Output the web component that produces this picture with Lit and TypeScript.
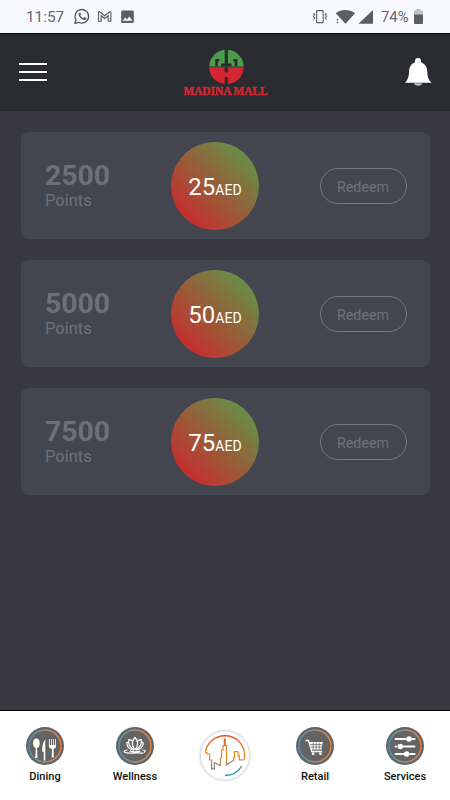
import { LitElement, html, css, svg } from "lit";
import { customElement, property } from "lit/decorators.js";

const dining = svg`
  <g fill="#fffdf0">
    <ellipse cx="10.4" cy="16.2" rx="3.3" ry="4.700"/><path d="M9.900 19.500h1.100l.5 11.500h-2.200z"/>
    <path d="M19.300 12.300c-2.600 3.600-3.500 8.200-3.100 12.500h1.500v8.700h1.600z"/>
    <path d="M22.900 12h.9v6h1.300v-6h.8v6h1.300v-6h.8v6h1.200v-6h.8v7c0 1.700-1 2.600-2.500 3l.4 8.500h-2.200l.3-8.500c-1.900-.4-3.100-1.300-3.100-3z"/>
  </g>`;

const wellness = svg`
  <g fill="none" stroke="#fff" stroke-width="1.250" stroke-linejoin="round" stroke-linecap="round">
    <path d="M19 10.500c-2.300 2.500-3.200 6-2 9 .4 1.200 1 2.100 2 3 1-.9 1.600-1.800 2-3 1.200-3 .3-6.500-2-9z"/>
    <path d="M15.800 13.500c-1.600-.9-2.400-.9-3-.8-.6 4 .5 7.500 5 9.900M22.200 13.500c1.600-.9 2.400-.9 3-.8.6 4-.5 7.500-5 9.900"/>
    <path d="M12.500 15.500c-.7-.3-1.200-.2-1.700.2.200 3.800 2 6.500 6.500 7.100M25.500 15.500c.7-.3 1.200-.2 1.700.2-.2 3.800-2 6.500-6.500 7.100"/>
    <path d="M11 23c-2.500.5-3.500 1.300-2.500 2 2 1.500 7 1.300 12 .9 3.200-.3 5 .1 6.300.5M27 23c2.500.5 2.700 1.600 1.200 2.300M14 24.200c3 .7 7 .7 10 0"/>
  </g>`;

const retail = svg`
  <path d="M9.500 13.500h3l3.300 11h10.400" fill="none" stroke="#fff" stroke-width="1.300"/>
  <path d="M13 15h13.800l-1.300 7.500H15z" fill="#fff"/>
  <path d="M14 17.600h12.500M14.500 20.100h11.500M17.200 15.700v6.500M20.200 15.700v6.500M23.200 15.700v6.500" stroke="#646464" stroke-width=".75"/>
  <circle cx="17.200" cy="26.700" r="1.400" fill="#fff"/><circle cx="24.500" cy="26.700" r="1.400" fill="#fff"/>`;

const services = svg`
  <g stroke="#fff" stroke-width="2.100" stroke-linecap="round">
    <path d="M9.500 12h10M26.500 12h2M9.500 19.500h.6M18 19.500h10.500M9.500 27h8M24.500 27h4"/>
  </g>
  <g fill="#fff"><circle cx="23" cy="12" r="2.800"/><circle cx="14.300" cy="19.500" r="2.800"/><circle cx="20.700" cy="27" r="2.800"/></g>`;

@customElement("status-bar")
class StatusBar extends LitElement {
  static styles = css`
    :host { display: flex; align-items: center; height: 34px; box-sizing: border-box; background: #f9faff; border-bottom: 1px solid #07071a; font: 400 15.300px Roboto, sans-serif; padding: 0 27px 0 26px; }
    .time { width: 47px; }
    .left { display: block; width: 62px; height: 33px; }
    .right { display: block; margin-left: auto; width: 64px; height: 33px; }
    .pct { width: 39px; padding-left: 6px; box-sizing: border-box; white-space: nowrap; font-size: 14.800px; }
    .battery { display: block; width: 9px; height: 33px; }
    .time, .pct { color: #66686b; line-height: 33px; padding-top: 1px; }
  `;
  render() {
    return html`
      <span class="time">11:57</span>
      <svg class="left" viewBox="73 0 62 33">
        <path d="M75 23.300l1-3.500a6.800 6.800 0 1 1 2.600 2.500z" fill="none" stroke="#56585b" stroke-width="1.300"/>
        <path d="M79.300 12.900c-.9 1-.9 2.200.2 3.900 1.300 2 3.200 3.300 5 3.300 1.200 0 2-.8 2-1.900l-2.200-1.100-1 1.100c-1.400-.6-2.300-1.500-3-2.900l.8-.9-.8-1.600z" fill="#56585b"/>
        <path d="M98.500 21.300v-9.200l1.200-.4 5 4 5-4 1.200.4v9.200h-2.700v-5.600l-3.500 2.800-3.500-2.800v5.600z" fill="none" stroke="#56585b" stroke-width="1.100"/>
        <path d="M122.500 10.500h10a1.300 1.300 0 0 1 1.300 1.300v10a1.300 1.300 0 0 1-1.300 1.300h-10a1.300 1.300 0 0 1-1.300-1.300v-10a1.300 1.300 0 0 1 1.300-1.300z" fill="#5c5e61"/>
        <path d="M122.700 20.700l2.500-3.200 1.700 2 2.400-3.100 3.200 4.300z" fill="#f9faff"/>
      </svg>
      <svg class="right" viewBox="311 0 64 33">
        <g fill="none" stroke="#5c5e61" stroke-width="1.100">
          <rect x="316.600" y="10.600" width="6.600" height="12" rx=".8"/>
          <path d="M313.500 13l1.200 1.500-1.200 1.700 1.200 1.700-1.200 1.600M326.500 13l-1.200 1.500 1.200 1.700-1.200 1.700 1.200 1.600"/>
        </g>
        <path d="M335.700 13.200c5.300-4.300 14-4.300 19.300 0l-9.500 10.600z" fill="#5c5e61"/>
        <path d="M335.500 18h3.500v6h-3.500z" fill="#f9faff"/><path d="M337.500 18.800v1.700M337.500 21.700v1.500" stroke="#5c5e61" stroke-width="1.500"/>
        <path d="M373 10v13.800h-14.500z" fill="#5c5e61"/>
      </svg>
      <span class="pct">74%</span>
      <svg class="battery" viewBox="0 0 9 33"><path d="M2.500 9h4v1.500H9V15H0v-4.500h2.500z" fill="#bfc0c4"/><path d="M0 14.500h9v8.700a.8.800 0 0 1-.8.800H.8a.8.800 0 0 1-.8-.8z" fill="#5c5e61"/></svg>`;
  }
}

@customElement("app-header")
class AppHeader extends LitElement {
  static styles = css`
    :host { display: flex; justify-content: space-between; height: 77px; box-sizing: border-box; padding: 0 18px 0 19px; background: #2b2c31; }
    .menu { display: flex; flex-direction: column; gap: 6px; padding-top: 29px; width: 28px; }
    .bar { height: 2px; background: #fff; box-shadow: 0 0 1px #000; }
    .logo { width: 90px; height: 60px; margin-top: 10px; }
    .brand { font: 700 11.500px "Liberation Serif", serif; }
    .bell { width: 28px; height: 32px; margin-top: 22px; }
    .group { display: flex; width: 252px; justify-content: space-between; }
  `;
  render() {
    return html`
      <div class="menu"><div class="bar"></div><div class="bar"></div><div class="bar"></div></div>
      <div class="group">
        <svg class="logo" viewBox="180 44 90 60">
          <path d="M209.200 66.500a17.200 16.700 0 0 1 34.400 0z" fill="#4b9b49"/>
          <path d="M209.200 67.300h34.400a17.200 16.800 0 0 1-34.400 0z" fill="#d32630"/>
          <path d="M224.700 49h3.200v14.500h3.600V66.500h-10.400V63.500h3.600zM215.300 59h4v2.500h-1.500v5h-2.500zM233.300 59h4v7.500h-2.500v-5h-1.500zM224.700 67.300h3.200v5.200h-3.200zM224.700 77h3.200v8h-3.200z" fill="#2b2c31"/>
          <text class="brand" x="183.500" y="95" textLength="84" lengthAdjust="spacingAndGlyphs" fill="#d32630" stroke="#d32630" stroke-width=".5">MADINA MALL</text>
        </svg>
        <svg class="bell" viewBox="404 56 28 32">
          <path d="M418 58a3 3 0 0 0-3 3v1.300c-4 1.500-6 5-6 9.700 0 5-1.500 8-4 10.800h26.500c-2.700-2.800-4.200-5.800-4.200-10.800 0-4.700-2.200-8.200-6.300-9.700V61a3 3 0 0 0-3-3z" fill="#fff"/>
          <path d="M413.800 83.300h8.500c-.8 1.700-2.200 2.500-4.200 2.500s-3.500-.8-4.300-2.500z" fill="#bfc0c1"/>
        </svg>
      </div>`;
  }
}

@customElement("reward-card")
class RewardCard extends LitElement {
  @property({ type: Number }) points = 0;
  @property({ type: Number }) amount = 0;
  static styles = css`
    :host { display: grid; grid-template-columns: 126px 88px 1fr; align-items: center; height: 107px; box-sizing: border-box; padding: 1px 23.500px 0 24px; border-radius: 8px; background: #43464f; color: #6d707a; font-family: Roboto, sans-serif; }
    .text { padding-bottom: 1px; }
    .number { font-size: 28.300px; line-height: 31px; font-weight: 700; }
    .label { font-size: 16.500px; line-height: 20px; }
    .coin { display: flex; align-items: baseline; justify-content: center; height: 88px; line-height: 90px; border-radius: 50%; background: linear-gradient(44deg, #c92b2d 12%, #649146 88%); color: #fff; font-size: 24px; }
    .unit { font-size: 14px; }
    .redeem { justify-self: end; width: 87px; height: 36px; box-sizing: border-box; border: 1px solid #747780; border-radius: 18px; background: none; color: inherit; font: 400 14.300px Roboto, sans-serif; padding: 1px 0 0; }
  `;
  render() {
    return html`
      <div class="text"><div class="number">${this.points}</div><div class="label">Points</div></div>
      <div class="coin"><span>${this.amount}</span><span class="unit">AED</span></div>
      <button class="redeem">Redeem</button>`;
  }
}

@customElement("bottom-nav")
class BottomNav extends LitElement {
  static styles = css`
    :host { display: grid; grid-template-columns: repeat(5, 90px); height: 90px; box-sizing: border-box; border-top: 1.500px solid #020204; background: #fff; color: #111; font: 500 11px Roboto, sans-serif; }
    .item { display: flex; flex-direction: column; align-items: center; padding-top: 16px; }
    .icon { width: 38px; height: 38px; }
    .label { line-height: 14px; margin-top: 5px; }
    .home { width: 54px; height: 54px; margin-top: 1px; }
  `;
  item(label: string, icon: unknown) {
    return html`<div class="item">
      <svg class="icon" viewBox="0 0 38 38">
        <defs><linearGradient id="ring"><stop stop-color="#3b9fc9"/><stop offset=".5" stop-color="#a4917e"/><stop offset="1" stop-color="#f58231"/></linearGradient></defs>
        <circle cx="19" cy="19" r="19" fill="#646464"/>
        <circle cx="19" cy="19" r="16" fill="none" stroke="url(#ring)" stroke-width="1.300"/>
        ${icon}
      </svg>
      <span class="label">${label}</span></div>`;
  }
  render() {
    return html`
      ${this.item("Dining", dining)}
      ${this.item("Wellness", wellness)}
      <div class="item"><svg class="home" viewBox="198 728 54 54">
        <defs><linearGradient id="city" gradientUnits="userSpaceOnUse" x1="225" y1="735" x2="225" y2="776"><stop stop-color="#dd542d"/><stop offset=".4" stop-color="#ed8c1b"/><stop offset=".65" stop-color="#cf8b45"/><stop offset=".85" stop-color="#29859e"/><stop offset="1" stop-color="#1499c5"/></linearGradient></defs>
        <circle cx="225" cy="755.500" r="25" fill="none" stroke="#efeff1" stroke-width="2.600"/>
        <circle cx="225" cy="755.500" r="24.600" fill="#fff" stroke="#dcdcdf" stroke-width="1"/>
        <g fill="none" stroke="url(#city)" stroke-width="1.200">
          <path d="M205.400 752.700c1.300-9.800 9.600-16.900 19.600-16.900 11 0 19.700 8.800 19.700 19.700 0 1.500-.2 3-.5 4.400M241.800 766c-3.500 5.800-9.800 9.500-16.800 9.500" stroke-width="1.400"/>
          <path d="M205.400 752.700h1.500v1.300h2.700v6h2v9h2.700v-6.500l6 3V758h1.300v-8h1.500v-4.500h1.200V739h1v6.500h1.200V764.800l7-4.500V758h.9v-6.300h3.700v4h1.200v4.200h4.300"/>
        </g></svg></div>
      ${this.item("Retail", retail)}
      ${this.item("Services", services)}`;
  }
}

@customElement("app-root")
class AppRoot extends LitElement {
  static styles = css`
    :host { display: flex; flex-direction: column; width: 450px; height: 800px; background: #383742; overflow: hidden; }
    .cards { display: flex; flex: 1; flex-direction: column; gap: 21px; padding: 21.400px 20px 0 21px; }
  `;
  render() {
    return html`
      <status-bar></status-bar>
      <app-header></app-header>
      <main class="cards">
        ${[[2500, 25], [5000, 50], [7500, 75]].map(([p, a]) => html`<reward-card .points=${p} .amount=${a}></reward-card>`)}
      </main>
      <bottom-nav></bottom-nav>`;
  }
}
